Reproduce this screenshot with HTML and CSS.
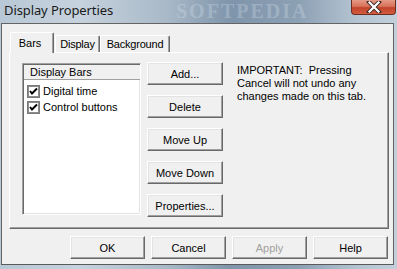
FILE: index.html
```html
<!DOCTYPE html>
<html>
<head>
<meta charset="utf-8">
<link rel="stylesheet" href="styles.css">
</head>
<body>
<div class="window">
  <div class="titlebar">
    <span class="title">Display Properties</span>
    <span class="wm">SOFTPEDIA</span>
    <div class="close">
      <svg width="16" height="12" viewBox="0 0 16 12"><path d="M3 1 L13 11 M13 1 L3 11" stroke="#3a2a2a" stroke-width="4" stroke-linecap="square"/><path d="M3.5 1.5 L12.5 10.5 M12.5 1.5 L3.5 10.5" stroke="#fff" stroke-width="2.2" stroke-linecap="square"/></svg>
    </div>
  </div>
  <div class="client">
    <div class="tabs">
      <div class="tab sel">Bars</div>
      <div class="tab t2">Display</div>
      <div class="tab t3">Background</div>
    </div>
    <div class="pane">
      <div class="listbox">
        <div class="lhead">Display Bars</div>
        <div class="item"><span class="chk"><svg width="13" height="13" viewBox="0 0 13 13"><rect x="0.5" y="0.5" width="12" height="12" fill="#fff" stroke="#7a7a7a"/><rect x="1.5" y="1.5" width="10" height="10" fill="none" stroke="#8c8c8c"/><path d="M3 6 L5 8.5 L10 3.5" fill="none" stroke="#000" stroke-width="2"/></svg></span>Digital time</div>
        <div class="item"><span class="chk"><svg width="13" height="13" viewBox="0 0 13 13"><rect x="0.5" y="0.5" width="12" height="12" fill="#fff" stroke="#7a7a7a"/><rect x="1.5" y="1.5" width="10" height="10" fill="none" stroke="#8c8c8c"/><path d="M3 6 L5 8.5 L10 3.5" fill="none" stroke="#000" stroke-width="2"/></svg></span>Control buttons</div>
      </div>
      <div class="btncol">
        <button class="btn">Add...</button>
        <button class="btn">Delete</button>
        <button class="btn">Move Up</button>
        <button class="btn">Move Down</button>
        <button class="btn">Properties...</button>
      </div>
      <div class="note">IMPORTANT:&nbsp; Pressing<br>Cancel will not undo any<br>changes made on this tab.</div>
    </div>
    <div class="footer">
      <button class="btn fb">OK</button>
      <button class="btn fb">Cancel</button>
      <button class="btn fb dis">Apply</button>
      <button class="btn fb">Help</button>
    </div>
  </div>
</div>
</body>
</html>
```
FILE: styles.css
```css
html, body {
  margin: 0;
  padding: 0;
}
body {
  width: 397px;
  height: 269px;
  overflow: hidden;
  font-family: "Liberation Sans", Arial, sans-serif;
  font-size: 11px;
  color: #000;
}
.window {
  width: 397px;
  height: 269px;
  box-sizing: border-box;
  padding: 0 3px 4px 1px;
  display: flex;
  flex-direction: column;
  background: linear-gradient(90deg, #b9c8d6 0%, #c6d2dd 20%, #a9b9c8 42%, #7f95ab 58%, #8ca0b4 75%, #b4c4d2 90%, #c3d0dc 100%);
}
.titlebar {
  height: 23px;
  display: flex;
  align-items: flex-start;
  position: relative;
}
.title {
  font-family: "Noto Sans", "Open Sans", sans-serif;
  font-size: 13px;
  line-height: 18px;
  color: #1a1a1a;
  margin: 1px 0 0 3px;
  letter-spacing: -0.1px;
}
.wm {
  position: absolute;
  left: 175px;
  top: 1px;
  font-family: "Liberation Serif", serif;
  font-weight: bold;
  font-size: 20px;
  line-height: 21px;
  letter-spacing: 2px;
  color: rgba(220, 230, 240, 0.3);
}
.close {
  margin-left: auto;
  width: 45px;
  height: 15px;
  margin-right: -2px;
  box-sizing: border-box;
  border: 1px solid #6b2c22;
  border-top: 0;
  border-radius: 0 0 4px 4px;
  background: linear-gradient(180deg, #e59a86 0%, #d8735a 45%, #c1442a 55%, #d45c3f 100%);
  display: flex;
  align-items: center;
  justify-content: center;
}
.client {
  flex: 1;
  background: #f0f0f0;
  border: 1px solid #646464;
  border-bottom-color: #5a5a5a;
  display: flex;
  flex-direction: column;
  padding: 8px 0 0 7px;
}
.tabs {
  display: flex;
  align-items: flex-end;
  height: 20px;
  padding-left: 1px;
  position: relative;
  z-index: 2;
}
.tab {
  box-sizing: border-box;
  height: 17px;
  padding: 2px 0 0 0;
  text-align: center;
  border: 1px solid #fff;
  border-right: 1px solid #696969;
  border-bottom: 0;
  box-shadow: inset -1px 0 0 #a0a0a0;
  background: #f0f0f0;
  border-radius: 2px 2px 0 0;
  line-height: 13px;
  letter-spacing: -0.2px;
}
.tab.sel {
  height: 21px;
  margin-bottom: -1px;
  padding: 4px 4px 0 0;
  width: 44px;
  letter-spacing: 0;
}
.t2 { width: 45px; margin-left: 1px; }
.t3 { width: 70px; }
.pane {
  box-sizing: border-box;
  width: 380px;
  height: 177px;
  border: 1px solid #fff;
  border-right-color: #696969;
  border-bottom-color: #696969;
  box-shadow: inset -1px -1px 0 #a0a0a0;
  display: flex;
  align-items: flex-start;
  padding: 10px 0 0 12px;
}
.listbox {
  box-sizing: border-box;
  width: 119px;
  height: 152px;
  background: #fff;
  border: 1px solid #a0a0a0;
  border-right-color: #fff;
  border-bottom-color: #fff;
  box-shadow: inset 1px 1px 0 #696969, inset -1px -1px 0 #e3e3e3;
  padding: 1px 0 0 1px;
}
.lhead {
  height: 15px;
  box-sizing: border-box;
  background: #f0f0f0;
  border-bottom: 1px solid #a0a0a0;
  padding-left: 6px;
  line-height: 14px;
}
.item {
  display: flex;
  align-items: center;
  height: 16px;
  padding-left: 3px;
  gap: 3px;
}
.lhead + .item { margin-top: 3px; }
.chk {
  width: 13px;
  height: 13px;
  display: flex;
}
.btncol {
  display: flex;
  flex-direction: column;
  gap: 10px;
  margin-left: 6px;
  margin-top: -1px;
}
.btn {
  box-sizing: border-box;
  width: 76px;
  height: 23px;
  padding: 0;
  margin: 0;
  font-family: "Liberation Sans", Arial, sans-serif;
  font-size: 11px;
  color: #000;
  background: #f0f0f0;
  border: 1px solid #fff;
  border-right-color: #696969;
  border-bottom-color: #696969;
  box-shadow: inset -1px -1px 0 #a0a0a0, inset 1px 1px 0 #e3e3e3;
  border-radius: 0;
}
.note {
  margin: 1px 0 0 14px;
  line-height: 13px;
}
.footer {
  display: flex;
  gap: 6px;
  justify-content: flex-end;
  padding-right: 5px;
  margin-top: 7px;
}
.fb {
  width: 75px;
}
.dis {
  color: #a0a0a0;
}
```
